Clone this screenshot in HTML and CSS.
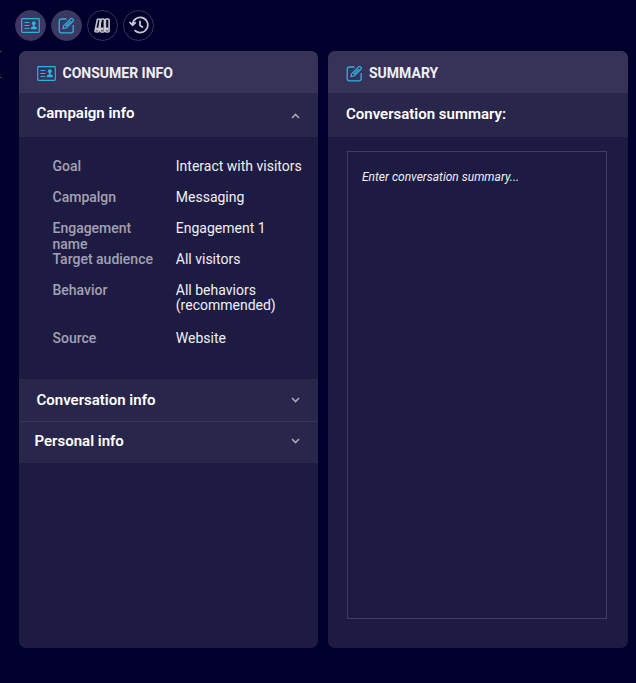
FILE: index.html
```html
<!DOCTYPE html>
<html lang="en">
<head>
<meta charset="utf-8">
<title>Consumer info</title>
<link rel="stylesheet" href="styles.css">
</head>
<body>
<svg class="defs" aria-hidden="true">
  <symbol id="card" viewBox="0 0 19 15">
    <rect x=".7" y=".7" width="17.6" height="13.6" rx=".8" fill="none" stroke="currentColor" stroke-width="1.2"/>
    <path d="M3.5 4.5h4.8M3.5 7.5h4.8M3.5 10.5h4.8" fill="none" stroke="currentColor" stroke-width="1.1"/>
    <circle cx="12.8" cy="5.3" r="2" fill="currentColor"/>
    <path d="M9.8 11.3V9.6L12 8.2V6.5h1.6v1.7l2.3 1.4v1.7z" fill="currentColor"/>
  </symbol>
  <symbol id="edit" viewBox="0 0 17 17">
    <path d="M8.5 2H3.6Q1.2 2 1.2 4.4v9q0 2.4 2.4 2.4h9.2q2.4 0 2.4-2.4V8" fill="none" stroke="currentColor" stroke-width="1.3"/>
    <path d="M5 11.6l.7-3L12.8 1.6q.7-.6 1.4 0l1 1q.6.7 0 1.400L8 11zM7.600 9.200L13 3.900" fill="none" stroke="currentColor" stroke-width="1.2" stroke-linejoin="round"/>
  </symbol>
</svg>
<div class="edge-mark"></div>
<nav class="toolbar">
  <button class="tool active" aria-label="Consumer info"><svg class="card-icon"><use href="#card"/></svg></button>
  <button class="tool active" aria-label="Summary"><svg class="edit-icon"><use href="#edit"/></svg></button>
  <button class="tool" aria-label="Library">
    <svg width="17" height="15" viewBox="0 0 17 15" fill="none" stroke="currentColor" stroke-width="1.6" stroke-linejoin="round"><path d="M3.400 1.300h2.400q.6.200.5.900L4.400 13.500q-.2.600-.8.500l-2-.3q-.7-.2-.6-.9zM7 2q0-1 1-1h1.400q1 0 1 1v11q0 1-1 1H7.200q-1 0-1-1V6zM11.400 2q0-1 1-1h1.700q1 0 1 1v11q0 1-1 1h-1.700q-1 0-1-1z"/><path d="M1.900 9.500l2.400.3-.4 3-2.200-.3zM7 9.500h2.600v3H7zM12 9.500h2.500v3H12z" fill="currentColor" stroke="none"/></svg>
  </button>
  <button class="tool" aria-label="History">
    <svg width="20" height="18" viewBox="0 0 20 18" fill="none" stroke="currentColor" stroke-width="1.8" stroke-linecap="round" stroke-linejoin="round"><path d="M3.600 8.500A7.600 7.600 0 1 1 6.200 14.700M1 6.500l2.500 2.700L6.300 6.800M11 5.500v4l2.400 1.500"/></svg>
  </button>
</nav>
<main class="panels">
  <section class="panel">
    <header class="title"><svg class="card-icon"><use href="#card"/></svg><h1>CONSUMER INFO</h1></header>
    <div class="bar first"><h2>Campaign info</h2><svg class="chevron" viewBox="0 0 9 6"><path d="M1 5l3.500-3.600L8 5"/></svg></div>
    <dl class="details">
      <div class="row"><dt>Goal</dt><dd>Interact with visitors</dd></div>
      <div class="row"><dt>Campalgn</dt><dd>Messaging</dd></div>
      <div class="row name"><dt>Engagement name</dt><dd>Engagement 1</dd></div>
      <div class="row"><dt>Target audience</dt><dd>All visitors</dd></div>
      <div class="row behavior"><dt>Behavior</dt><dd>All behaviors (recommended)</dd></div>
      <div class="row"><dt>Source</dt><dd>Website</dd></div>
    </dl>
    <div class="bar"><h2>Conversation info</h2><svg class="chevron" viewBox="0 0 9 6"><path d="M1 1l3.500 3.600L8 1"/></svg></div>
    <div class="bar last"><h2>Personal info</h2><svg class="chevron" viewBox="0 0 9 6"><path d="M1 1l3.500 3.600L8 1"/></svg></div>
  </section>
  <section class="panel summary">
    <header class="title"><svg class="edit-icon"><use href="#edit"/></svg><h1>SUMMARY</h1></header>
    <div class="bar first"><h2>Conversation summary:</h2></div>
    <div class="editor"><span class="hint">Enter conversation summary...</span></div>
  </section>
</main>
</body>
</html>
```
FILE: styles.css
```css
* { box-sizing: border-box; }
body {
  margin: 0;
  height: 683px;
  overflow: hidden;
  padding: 9.5px 8px 0 15px;
  background: #01002c;
  color: #f0f0f5;
  font-family: Roboto, "Liberation Sans", sans-serif;
}
h1, h2, dl, dd { margin: 0; }
svg { display: block; flex: none; }
.defs { position: absolute; width: 0; height: 0; }
.edge-mark {
  position: absolute;
  left: 0;
  top: 51px;
  width: 2px;
  height: 27px;
  border: solid #44425f;
  border-width: 1px 0;
}
.card-icon { width: 19px; height: 15px; color: #2eb0e0; }
.edit-icon { width: 17px; height: 17px; color: #2eb0e0; }
.toolbar { display: flex; gap: 5px; height: 41.5px; }
.tool {
  display: flex;
  align-items: center;
  justify-content: center;
  width: 31px;
  height: 31px;
  padding: 0;
  border: 1px solid #37335b;
  border-radius: 50%;
  background: none;
  color: #c9c7cc;
}
.tool.active { background: #3b3962; border-color: #3b3962; }
.panels { display: flex; gap: 10px; padding-left: 3.500px; }
.panel {
  width: 299.5px;
  height: 597px;
  border-radius: 7px;
  overflow: hidden;
  background: #1e1b42;
}
.title {
  display: flex;
  align-items: center;
  gap: 7px;
  height: 42px;
  padding: 3px 18px 0;
  background: #373358;
}
.title h1 { font-size: 14px; line-height: 18px; font-weight: 700; margin-top: -1px; }
.summary .title { gap: 6px; }
.bar {
  display: flex;
  align-items: center;
  justify-content: space-between;
  height: 42px;
  padding: 0 18px;
  background: #29264b;
}
.bar h2 { font-size: 15px; line-height: 18px; font-weight: 600; color: #fff; }
.bar.first { height: 44px; padding-bottom: 4px; }
.bar.first .chevron { margin-top: 5px; }
.summary .bar.first { padding-bottom: 2px; }
.bar.last { padding-left: 16px; padding-bottom: 3px; border-top: 1px solid #37345c; }
.chevron { width: 9px; height: 6px; fill: none; stroke: #aaa8b8; stroke-width: 1.5; }
.details {
  height: 242px;
  padding: 22px 10px 0 34px;
  font-size: 14px;
  line-height: 15px;
}
.row { display: grid; grid-template-columns: 123.300px 1fr; height: 31px; }
.row.behavior { height: 48px; }
dt { padding-right: 15px; color: #a3a1b1; font-weight: 500; white-space: nowrap; }
.name dt { margin-top: -1px; white-space: normal; line-height: 16px; }
.editor {
  width: 260px;
  height: 468px;
  margin: 14px 0 0 19px;
  padding: 17px 14px;
  border: 1px solid #403d64;
  font-size: 12px;
  line-height: 16px;
  font-style: italic;
}
```
